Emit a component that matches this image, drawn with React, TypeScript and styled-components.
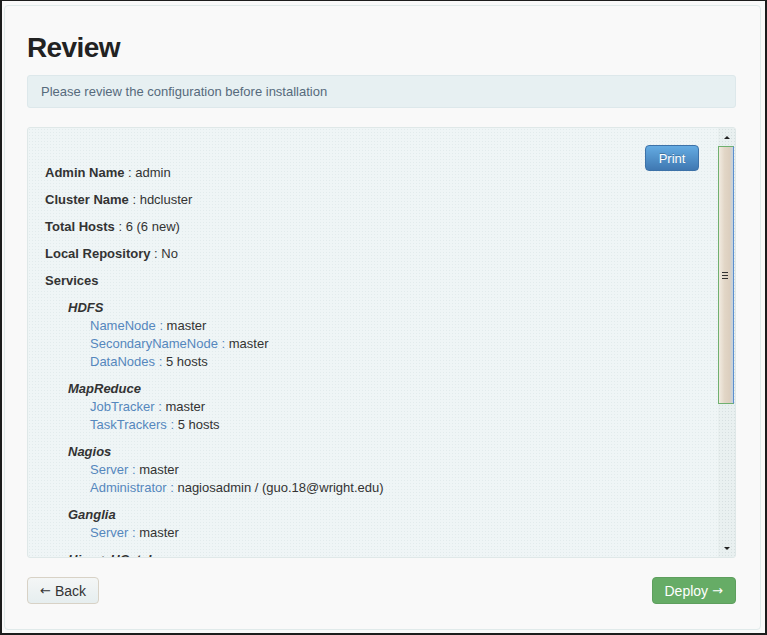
import React from "react";
import styled, { createGlobalStyle } from "styled-components";

const Global = createGlobalStyle`
  html, body { margin: 0; padding: 0; background: #1c1c1c; }
  body { font-family: "Liberation Sans", Arial, sans-serif; font-size: 13px; color: #333; }
  * { box-sizing: border-box; }
`;

const Frame = styled.div`
  width: 767px;
  height: 635px;
  background: #f9f9f9;
  border-style: solid;
  border-color: #1c1c1c;
  border-width: 1px 2px 2px 2px;
  padding: 4px 4px 3px 2px;
  display: flex;
`;

const Page = styled.div`
  flex: 1;
  border: 1px solid #e0eaea;
  border-radius: 4px;
  background: #f9f9f9;
  padding: 26px 24px 0 22px;
  display: flex;
  flex-direction: column;
`;

const Title = styled.h1`
  margin: 0 0 11px;
  font-size: 28px;
  line-height: 32px;
  letter-spacing: -0.6px;
  font-weight: bold;
  color: #222;
`;

const Alert = styled.div`
  height: 33px;
  border: 1px solid #dde8eb;
  border-radius: 3px;
  background: #e7f0f2;
  color: #566a7c;
  padding: 0 13px;
  display: flex;
  align-items: center;
  margin-bottom: 19px;
`;

const Panel = styled.div`
  height: 431px;
  border: 1px solid #dfe8e8;
  border-radius: 3px;
  background-color: #eff5f6;
  background-image: radial-gradient(#e2ebec 0.6px, transparent 0.8px);
  background-size: 3px 3px;
  display: flex;
  overflow: hidden;
`;

const Scroller = styled.div`
  flex: 1;
  overflow: hidden;
  padding: 17px 19px 0 17px;
`;

const PrintButton = styled.button`
  float: right;
  width: 54px;
  height: 26px;
  border: 1px solid #3d72a8;
  border-radius: 4px;
  background: linear-gradient(#64abe2, #3f78b2);
  color: #fff;
  font-family: inherit;
  font-size: 13px;
  text-shadow: 0 -1px 0 rgba(0, 0, 0, 0.25);
  padding: 0;
`;

const List = styled.div`
  padding-top: 19px;
`;

const Row = styled.div`
  line-height: 18px;
  margin-bottom: 9px;
  color: #333;
`;

const Key = styled.b`
  font-weight: bold;
  color: #333;
`;

const Services = styled.div`
  padding-left: 23px;
`;

const Group = styled.div`
  margin-bottom: 9px;
`;

const GroupName = styled.div`
  font-style: italic;
  font-weight: bold;
  line-height: 18px;
  color: #333;
`;

const Item = styled.div`
  padding-left: 22px;
  line-height: 18px;
  color: #333;
`;

const ItemKey = styled.span`
  color: #5587bd;
`;

const Track = styled.div`
  width: 17px;
  background-color: #e9f0f0;
  background-image: radial-gradient(#d6dfe0 0.6px, transparent 0.8px);
  background-size: 3px 3px;
  display: flex;
  flex-direction: column;
  align-items: center;
`;

const Arrow = styled.div<{ $down?: boolean }>`
  height: 18px;
  width: 100%;
  display: flex;
  align-items: center;
  justify-content: center;
  &::before {
    content: "";
    border-left: 3px solid transparent;
    border-right: 3px solid transparent;
    ${(p) => (p.$down ? "border-top: 3px solid #222;" : "border-bottom: 3px solid #222;")}
  }
`;

const Thumb = styled.div`
  width: 16px;
  height: 258px;
  align-self: flex-start;
  border: 1px solid #6fb06f;
  border-right: 1px solid #5b8fd0;
  background: linear-gradient(to right, #f1ebe1, #e2d6c6 40%, #dccfbf 75%, #c4d3e0);
  display: flex;
  align-items: center;
  justify-content: center;
`;

const Grip = styled.div`
  width: 6px;
  height: 7px;
  margin-left: -2px;
  margin-top: 1px;
  background: repeating-linear-gradient(#333 0 1px, transparent 1px 3px);
`;

const Spacer = styled.div`
  flex: 1;
`;

const Footer = styled.div`
  margin-top: 19px;
  display: flex;
  justify-content: space-between;
  align-items: flex-start;
`;

const Button = styled.button<{ $primary?: boolean }>`
  height: 27px;
  border-radius: 4px;
  font-family: inherit;
  font-size: 14px;
  padding: 0 12px;
  display: inline-flex;
  align-items: center;
  gap: 4px;
  border: 1px solid ${(p) => (p.$primary ? "#5e9f5e" : "#d8d2c6")};
  background: ${(p) => (p.$primary ? "#66ac66" : "linear-gradient(#f4f6f6, #e6eeef)")};
  color: ${(p) => (p.$primary ? "#fff" : "#333")};
`;

const ArrowGlyph = styled.span`
  font-family: "DejaVu Sans", sans-serif;
  font-size: 13px;
`;

type Svc = { name: string; items: [string, string][] };

const services: Svc[] = [
  { name: "HDFS", items: [["NameNode", "master"], ["SecondaryNameNode", "master"], ["DataNodes", "5 hosts"]] },
  { name: "MapReduce", items: [["JobTracker", "master"], ["TaskTrackers", "5 hosts"]] },
  { name: "Nagios", items: [["Server", "master"], ["Administrator", "nagiosadmin / (guo.18@wright.edu)"]] },
  { name: "Ganglia", items: [["Server", "master"]] },
  { name: "Hive + HCatalog", items: [] },
];

export default function App() {
  return (
    <>
      <Global />
      <Frame>
        <Page>
          <Title>Review</Title>
          <Alert>Please review the configuration before installation</Alert>
          <Panel>
            <Scroller>
              <PrintButton>Print</PrintButton>
              <List>
                <Row><Key>Admin Name</Key> : admin</Row>
                <Row><Key>Cluster Name</Key> : hdcluster</Row>
                <Row><Key>Total Hosts</Key> : 6 (6 new)</Row>
                <Row><Key>Local Repository</Key> : No</Row>
                <Row><Key>Services</Key></Row>
                <Services>
                  {services.map((s) => (
                    <Group key={s.name}>
                      <GroupName>{s.name}</GroupName>
                      {s.items.map(([k, v]) => (
                        <Item key={k}>
                          <ItemKey>{k} : </ItemKey>
                          {v}
                        </Item>
                      ))}
                    </Group>
                  ))}
                </Services>
              </List>
            </Scroller>
            <Track>
              <Arrow />
              <Thumb>
                <Grip />
              </Thumb>
              <Spacer />
              <Arrow $down />
            </Track>
          </Panel>
          <Footer>
            <Button><ArrowGlyph>←</ArrowGlyph>Back</Button>
            <Button $primary>Deploy<ArrowGlyph>→</ArrowGlyph></Button>
          </Footer>
        </Page>
      </Frame>
    </>
  );
}
